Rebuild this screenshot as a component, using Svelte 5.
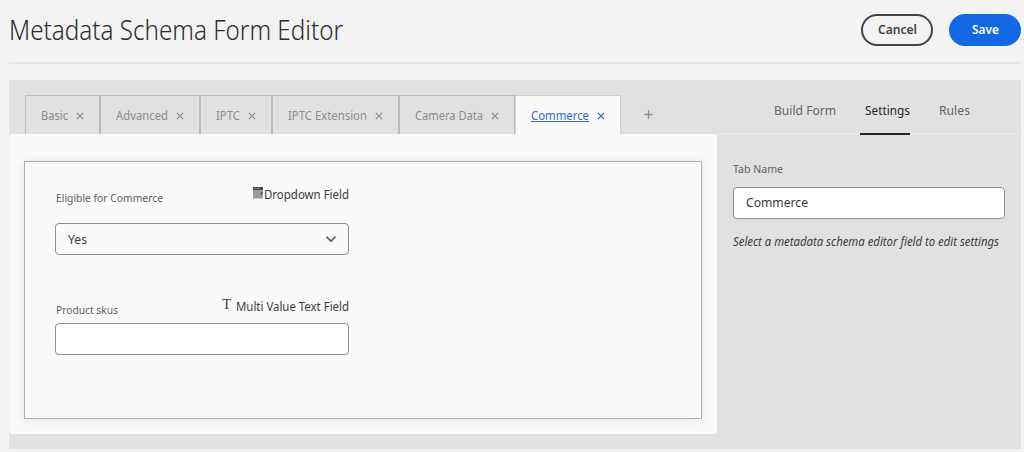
<script>
  const tabs = [
    { name: 'Basic', w: 75, t: 27 },
    { name: 'Advanced', w: 100, t: 52 },
    { name: 'IPTC', w: 72, t: 24 },
    { name: 'IPTC Extension', w: 127, t: 79 },
    { name: 'Camera Data', w: 116, t: 68 },
    { name: 'Commerce', w: 106, t: 58, active: true }
  ];
  const sections = [
    { name: 'Build Form', t: 62 },
    { name: 'Settings', t: 45, active: true },
    { name: 'Rules', t: 31 }
  ];
  let tabName = $state('Commerce');
</script>

{#snippet label(text, width)}
  <svg class="label" {width} height="20"><text x="0" y="15" textLength={width} lengthAdjust="spacingAndGlyphs">{text}</text></svg>
{/snippet}

<div class="page">
  <header>
    <h1><svg class="label" width="334" height="40"><text x="0" y="31" textLength="334" lengthAdjust="spacingAndGlyphs">Metadata Schema Form Editor</text></svg></h1>
    <div class="actions">
      <button class="cancel">{@render label('Cancel', 39)}</button>
      <button class="save">{@render label('Save', 27)}</button>
    </div>
  </header>

  <main>
    <section class="editor">
      <nav class="tabs">
        {#each tabs as tab}
          <div class="tab" class:active={tab.active} style:width="{tab.w}px">
            <span class="tab-name">{@render label(tab.name, tab.t)}</span>
            <svg class="close" width="8" height="8" viewBox="0 0 8 8"><path d="M.9.9l6.2 6.2M7.1.9L.9 7.1" /></svg>
          </div>
        {/each}
        <svg class="add" width="9" height="9" viewBox="0 0 9 9"><path d="M4.5.3v8.4M.3 4.5h8.4" /></svg>
      </nav>
      <div class="panel">
        <div class="form">
          <div class="field">
            <div class="row">
              <span class="name">{@render label('Eligible for Commerce', 107)}</span>
              <span class="type">
                <svg width="10" height="12" viewBox="0 0 10 12">
                  <path d="M0 0h10v11.5H0z" fill="#a0a0a0" />
                  <path d="M0 0h10v3H0z" fill="#464646" />
                  <path d="M1 1.4h6" stroke="#aaa" stroke-width=".6" />
                  <path d="M8 5h2L8.400 8H7.300z" fill="#555" />
                  <path d="M1 5h5M1 7.500h5M1 10h8" stroke="#8c8c8c" stroke-width=".6" />
                </svg>{@render label('Dropdown Field', 85)}
              </span>
            </div>
            <div class="box select">
              {@render label('Yes', 19)}
              <svg class="chevron" width="10" height="7" viewBox="0 0 10 7"><path d="M1 1.200l4 4 4-4" /></svg>
            </div>
          </div>
          <div class="field">
            <div class="row">
              <span class="name">{@render label('Product skus', 62)}</span>
              <span class="type"><span class="serif">T</span>{@render label('Multi Value Text Field', 113)}</span>
            </div>
            <div class="box text"></div>
          </div>
        </div>
      </div>
    </section>

    <aside>
      <nav class="sections">
        {#each sections as s}
          <div class="section" class:active={s.active}>{@render label(s.name, s.t)}</div>
        {/each}
      </nav>
      <div class="settings">
        <span class="name">{@render label('Tab Name', 50)}</span>
        <div class="box value">{@render label(tabName, 62)}</div>
        <em>{@render label('Select a metadata schema editor field to edit settings', 266)}</em>
      </div>
    </aside>
  </main>
</div>

<style>
  :global(body) { background: #f3f3f3; }
  .page {
    box-sizing: border-box;
    height: 452px;
    padding: 0 3px 3px 9px;
    font-family: "Noto Sans", "Open Sans", sans-serif;
    font-size: 13px;
    color: #3a3a3a;
    overflow: hidden;
  }
  .label { display: block; overflow: visible; flex: none; }
  .label text { fill: currentColor; }
  header {
    box-sizing: border-box;
    height: 64px;
    border-bottom: 2px solid #e6e6e6;
    display: flex;
    justify-content: space-between;
  }
  h1 {
    margin: 9px 0 0;
    font-size: 27px;
    font-weight: 300;
    color: #2c2c2c;
  }
  .actions { display: flex; gap: 16px; padding-top: 14px; }
  button {
    box-sizing: border-box;
    width: 72px;
    height: 32px;
    padding: 0 0 2px;
    display: flex;
    align-items: center;
    justify-content: center;
    border: 2px solid #444;
    border-radius: 16px;
    background: transparent;
    font: 600 13px "Noto Sans", sans-serif;
    color: #444;
  }
  .save { background: #1468e3; border-color: #1468e3; color: #fff; }
  main {
    height: 369px;
    margin-top: 16px;
    background: #e1e1e1;
    display: flex;
  }
  .editor { width: 708px; }
  .tabs {
    height: 39px;
    padding: 15px 0 0 16px;
    display: flex;
    font-size: 12.6px;
    color: #8c8c8c;
  }
  .tab {
    box-sizing: border-box;
    border: 1px solid #bcbcbc;
    border-bottom: 0;
    padding-left: 15px;
    display: flex;
    align-items: center;
    gap: 7.5px;
  }
  .tab-name { margin-top: -1px; }
  .tab.active { background: #fafafa; border-color: #d0d0d0; color: #326bd0; }
  .active .tab-name { border-bottom: 1px solid #326bd0; height: 16px; margin-top: -4px; }
  .close { margin-top: 2px; }
  .close path, .add path { stroke: currentColor; stroke-width: 1.3; fill: none; }
  .add { margin: 15px 0 0 23px; }
  .panel {
    box-sizing: border-box;
    height: 300px;
    padding: 27px 15px 15px;
    border-radius: 4px;
    background: #fafafa;
  }
  .form {
    box-sizing: border-box;
    height: 258px;
    border: 1px solid #b0b0b0;
    box-shadow: 0 0 10px rgba(0, 0, 0, .09);
    padding: 22px 30px;
    display: flex;
    flex-direction: column;
    gap: 41px;
  }
  .field { width: 294px; }
  .row { display: flex; justify-content: space-between; }
  .name { font-size: 11.6px; color: #606060; padding-top: 3px; }
  .field .name { padding-left: .5px; }
  .type { display: flex; font-size: 13px; color: #3c3c3c; }
  .type > svg:first-child { margin: 3px 1px 0 0; }
  .serif { font: 14.5px/20px "Liberation Serif", serif; margin: -2px 5px 0 0; }
  .box {
    box-sizing: border-box;
    height: 32px;
    border: 1px solid #8f8f8f;
    border-radius: 4px;
    display: flex;
    align-items: center;
    padding: 0 12px;
    background: #fff;
  }
  .select { margin-top: 16px; justify-content: space-between; background: #fafafa; }
  .text { margin-top: 4px; }
  .chevron path { fill: none; stroke: #666; stroke-width: 1.8; stroke-linecap: round; }
  aside { width: 304px; }
  .sections {
    box-sizing: border-box;
    height: 55px;
    padding: 20px 0 0 57px;
    border-bottom: 2px solid #e6e6e6;
    display: flex;
    gap: 24px;
    font-size: 13.3px;
    color: #656565;
  }
  .section { height: 33px; }
  .section:last-child { margin-left: 5px; }
  .section.active { color: #252525; border-bottom: 2px solid #222; padding-left: 5px; }
  .settings { padding: 20px 16px; }
  .settings .name { display: block; }
  .value { margin-top: 9px; padding: 0 12px 2px 11.5px; }
  em { display: block; margin-top: 12px; font-size: 12.4px; }
</style>
